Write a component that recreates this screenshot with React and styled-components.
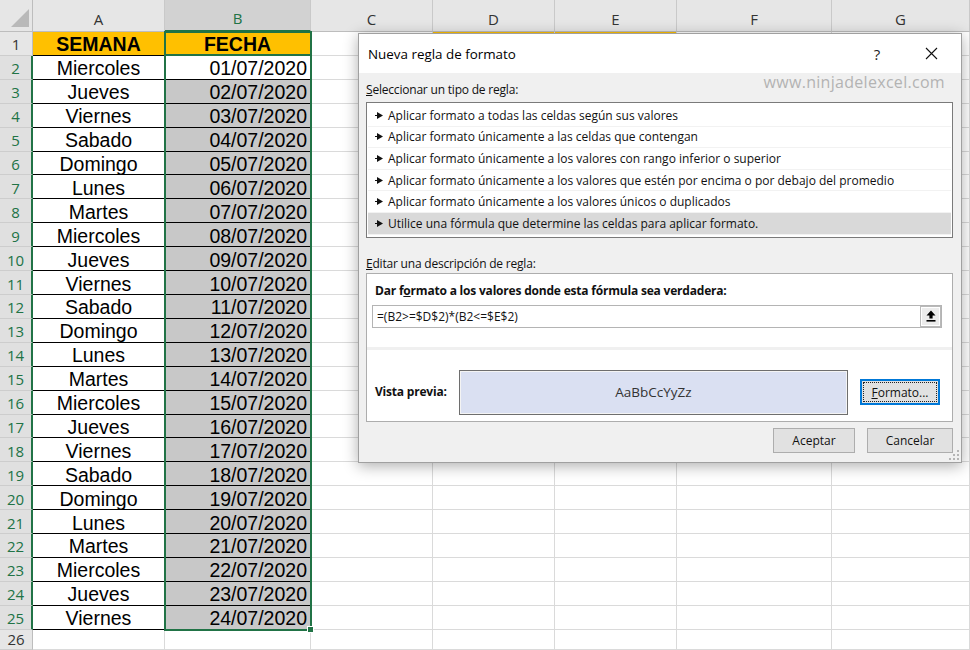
import React from 'react';
import styled, { createGlobalStyle, css } from 'styled-components';

const GREEN = '#217346';

const GlobalStyle = createGlobalStyle`
  html, body { margin: 0; padding: 0; background: #fff; overflow: hidden; }
  body { font-family: "Open Sans", "Noto Sans", sans-serif; }
`;

const Page = styled.div`
  position: relative;
  width: 970px;
  height: 650px;
  overflow: hidden;
  background: #fff;
`;

/* ---------- spreadsheet ---------- */

const Sheet = styled.div`
  position: relative;
  display: grid;
  grid-template-columns: 33px 132px 146px 122px 122px 122px 155px 1fr;
  grid-template-rows: 32px repeat(25, 23.92px) 20px;
`;

const Corner = styled.div`
  box-sizing: border-box;
  background: #e6e6e6;
  border-right: 1px solid #bdbdbd;
  border-bottom: 1px solid #bdbdbd;
  display: flex;
  align-items: flex-end;
  justify-content: flex-end;
  padding: 0 3px 4px 0;
`;

const ColHead = styled.div`
  box-sizing: border-box;
  display: flex;
  align-items: center;
  justify-content: center;
  padding-top: 6px;
  font: 15px "Open Sans", sans-serif;
  background: ${p => (p.$selected ? '#d2d2d2' : '#e6e6e6')};
  color: ${p => (p.$selected ? GREEN : '#333')};
  border-right: 1px solid #c9c9c9;
  border-bottom: ${p => (p.$selected ? `2px solid ${GREEN}` : '1px solid #bdbdbd')};
`;

const RowHead = styled.div`
  box-sizing: border-box;
  display: flex;
  align-items: center;
  justify-content: center;
  padding-top: ${p => (p.$last ? 0 : 2)}px;
  font: 15px "Open Sans", sans-serif;
  background: ${p => (p.$selected ? '#e0e0e0' : '#e6e6e6')};
  color: ${p => (p.$selected ? GREEN : '#333')};
  border-bottom: 1px solid #cdcdcd;
  border-right: ${p => (p.$selected ? `2px solid ${GREEN}` : '1px solid #bdbdbd')};
`;

const kinds = {
  title: css`
    background: #ffc000;
    font-weight: bold;
    justify-content: center;
    border-color: #000;
  `,
  orange: css`
    background: #ffc000;
  `,
  name: css`
    justify-content: center;
    border-color: #000;
  `,
  date: css`
    justify-content: flex-end;
    padding-right: 3px;
    background: #c8c8c8;
    border-color: #000;
  `,
  blank: css``,
};

const Cell = styled.div`
  box-sizing: border-box;
  display: flex;
  align-items: center;
  padding-top: 3px;
  overflow: hidden;
  white-space: nowrap;
  font: 19.5px "Liberation Sans", Arial, sans-serif;
  color: #000;
  border-right: 1px solid #dadada;
  border-bottom: 1px solid #dadada;
  ${p => kinds[p.$kind || 'blank']}
  ${p => p.$active && css`background: #fff;`}
  ${p => p.$greenBottom && css`border-bottom: 2px solid ${GREEN};`}
`;

const Selection = styled.div`
  position: absolute;
  left: 164px;
  top: 31px;
  width: 148px;
  height: 600px;
  box-sizing: border-box;
  border: 2px solid ${GREEN};
  pointer-events: none;
`;

const FillHandle = styled.div`
  position: absolute;
  left: 307px;
  top: 626px;
  width: 7px;
  height: 7px;
  box-sizing: border-box;
  background: ${GREEN};
  border: 1px solid #fff;
`;

/* ---------- dialog ---------- */

const Dialog = styled.div`
  position: absolute;
  left: 358px;
  top: 33px;
  width: 604px;
  height: 430px;
  box-sizing: border-box;
  display: flex;
  flex-direction: column;
  background: #f0f0f0;
  border: 1px solid #a0a0a0;
  box-shadow: 0 3px 14px rgba(0, 0, 0, 0.32);
  font-family: "Open Sans", "Noto Sans", sans-serif;
  font-size: 12px;
  color: #111;
`;

const TitleBar = styled.div`
  flex: none;
  height: 39px;
  display: flex;
  align-items: center;
  background: #fff;
  padding-left: 9px;
`;

const Title = styled.div`
  flex: 1;
  font-size: 13.4px;
  color: #000;
`;

const TitleButton = styled.div`
  width: 46px;
  height: 39px;
  display: flex;
  align-items: center;
  justify-content: center;
  margin-right: ${p => p.$gap}px;
  font-size: 15px;
  color: #222;
`;

const Watermark = styled.div`
  position: absolute;
  top: 37px;
  right: 16px;
  font-size: 16px;
  letter-spacing: 0.3px;
  color: #b3b3b3;
`;

const Body = styled.div`
  flex: 1;
  display: flex;
  flex-direction: column;
  padding: 0 8px 0 7px;
`;

const Label = styled.div`
  margin-top: ${p => p.$top}px;
  line-height: 14px;
  letter-spacing: -0.2px;
`;

const ListBox = styled.div`
  margin-top: 5px;
  border: 1px solid #7a7a7a;
  background: #fff;
  padding: 2px 1px;
`;

const ListItem = styled.div`
  box-sizing: border-box;
  height: 21.6px;
  display: flex;
  align-items: center;
  padding-left: 7px;
  border-bottom: 1px solid #f2f2f2;
  white-space: nowrap;
  background: ${p => (p.$selected ? '#d9d9d9' : 'transparent')};
`;

const Pointer = styled.svg`
  flex: none;
  margin-right: 5px;
`;

const DescBox = styled.div`
  margin-top: 2px;
  height: 149px;
  box-sizing: border-box;
  border: 1px solid #adadad;
  background: #fff;
  display: flex;
  flex-direction: column;
`;

const Upper = styled.div`
  flex: none;
  height: 73px;
  box-sizing: border-box;
  padding: 10px 10px 0 5px;
`;

const BoldLabel = styled.div`
  font-weight: bold;
  line-height: 14px;
  letter-spacing: -0.2px;
  white-space: nowrap;
  padding-left: ${p => p.$pad || 0}px;
`;

const FormulaInput = styled.div`
  margin-top: 7px;
  height: 23px;
  box-sizing: border-box;
  border: 1px solid #b4b4b4;
  display: flex;
  align-items: center;
  padding-left: 4px;
`;

const RefButton = styled.div`
  margin-left: auto;
  width: 21px;
  height: 21px;
  box-sizing: border-box;
  border: 1px solid #b9b9b9;
  box-shadow: inset 0 0 0 1px #fff;
  background: #ececec;
  display: flex;
  align-items: center;
  justify-content: center;
`;

const Separator = styled.div`
  flex: none;
  height: 3px;
  background: #f0f0f0;
`;

const Lower = styled.div`
  flex: 1;
  display: flex;
  align-items: center;
  padding-top: 14px;
`;

const PreviewLabel = styled(BoldLabel)`
  width: 92px;
  box-sizing: border-box;
  padding-left: 8px;
`;

const Preview = styled.div`
  width: 389px;
  height: 45px;
  box-sizing: border-box;
  border: 1px solid #6e6e6e;
  box-shadow: inset 0 0 0 1px #f4f4f4;
  background: #dae0f2;
  display: flex;
  align-items: center;
  justify-content: center;
  font-size: 13.5px;
  color: #333;
`;

const Button = styled.div`
  width: ${p => p.$w}px;
  height: ${p => p.$h || 25}px;
  box-sizing: border-box;
  border: 1px solid #adadad;
  background: #e1e1e1;
  display: flex;
  align-items: center;
  justify-content: center;
  font-size: 12px;
  ${p => p.$focused && css`
    border: 2px solid #0078d7;
    padding: 1px;
  `}
`;

const FocusRing = styled.span`
  flex: 1;
  align-self: stretch;
  display: flex;
  align-items: center;
  justify-content: center;
  border: 1px dotted #222;
`;

const ButtonRow = styled.div`
  margin-top: 6px;
  display: flex;
  justify-content: flex-end;
  gap: 12px;
`;

const Grip = styled.svg`
  position: absolute;
  right: 2px;
  bottom: 2px;
`;

/* ---------- data ---------- */

const DAYS = ['Miercoles', 'Jueves', 'Viernes', 'Sabado', 'Domingo', 'Lunes', 'Martes'];
const ROWS = Array.from({ length: 24 }, (_, i) => ({
  day: DAYS[i % 7],
  date: `${String(i + 1).padStart(2, '0')}/07/2020`,
}));
const COLS = ['A', 'B', 'C', 'D', 'E', 'F', 'G'];

const RULES = [
  'Aplicar formato a todas las celdas según sus valores',
  'Aplicar formato únicamente a las celdas que contengan',
  'Aplicar formato únicamente a los valores con rango inferior o superior',
  'Aplicar formato únicamente a los valores que estén por encima o por debajo del promedio',
  'Aplicar formato únicamente a los valores únicos o duplicados',
  'Utilice una fórmula que determine las celdas para aplicar formato.',
];

const Blanks = ({ n, row }) =>
  Array.from({ length: n }, (_, i) => <Cell key={`${row}-b${i}`} />);

export default function App() {
  return (
    <Page>
      <GlobalStyle />
      <Sheet>
        <Corner>
          <svg width="18" height="18" viewBox="0 0 18 18">
            <polygon points="18,0 18,18 0,18" fill="#b9b9b9" />
          </svg>
        </Corner>
        {COLS.map(c => (
          <ColHead key={c} $selected={c === 'B'}>{c}</ColHead>
        ))}

        <RowHead>1</RowHead>
        <Cell $kind="title">SEMANA</Cell>
        <Cell $kind="title" $greenBottom>FECHA</Cell>
        <Cell />
        <Cell $kind="orange" />
        <Cell $kind="orange" />
        <Cell />
        <Cell />

        {ROWS.map((r, i) => (
          <React.Fragment key={r.date}>
            <RowHead $selected>{i + 2}</RowHead>
            <Cell $kind="name">{r.day}</Cell>
            <Cell $kind="date" $active={i === 0}>{r.date}</Cell>
            <Blanks n={5} row={i} />
          </React.Fragment>
        ))}

        <RowHead $last>26</RowHead>
        <Blanks n={7} row={26} />

        <Selection />
        <FillHandle />
      </Sheet>

      <Dialog>
        <TitleBar>
          <Title>Nueva regla de formato</Title>
          <TitleButton $gap={8}>?</TitleButton>
          <TitleButton $gap={7}>
            <svg width="13" height="13" viewBox="0 0 13 13">
              <path d="M1 1L12 12M12 1L1 12" stroke="#111" strokeWidth="1.1" />
            </svg>
          </TitleButton>
        </TitleBar>
        <Watermark>www.ninjadelexcel.com</Watermark>

        <Body>
          <Label $top={10}><u>S</u>eleccionar un tipo de regla:</Label>
          <ListBox>
            {RULES.map((t, i) => (
              <ListItem key={t} $selected={i === RULES.length - 1}>
                <Pointer width="8" height="7" viewBox="0 0 8 7">
                  <rect x="0" y="3" width="3" height="1" fill="#111" />
                  <polygon points="2,0 8,3.5 2,7" fill="#111" />
                </Pointer>
                {t}
              </ListItem>
            ))}
          </ListBox>

          <Label $top={19}><u>E</u>ditar una descripción de regla:</Label>
          <DescBox>
            <Upper>
              <BoldLabel $pad={3}>Dar f<u>o</u>rmato a los valores donde esta fórmula sea verdadera:</BoldLabel>
              <FormulaInput>
                =(B2&gt;=$D$2)*(B2&lt;=$E$2)
                <RefButton>
                  <svg width="10" height="12" viewBox="0 0 10 12">
                    <polygon points="5,0.5 9.5,5.5 6.6,5.5 6.6,8.5 3.4,8.5 3.4,5.5 0.5,5.5" fill="#000" />
                    <rect x="0.5" y="10" width="9" height="1.6" fill="#000" />
                  </svg>
                </RefButton>
              </FormulaInput>
            </Upper>
            <Separator />
            <Lower>
              <PreviewLabel>Vista previa:</PreviewLabel>
              <Preview>AaBbCcYyZz</Preview>
              <div style={{ width: 12 }} />
              <Button $w={80} $h={26} $focused>
                <FocusRing><u>F</u>ormato...</FocusRing>
              </Button>
            </Lower>
          </DescBox>

          <ButtonRow>
            <Button $w={82}>Aceptar</Button>
            <Button $w={86}>Cancelar</Button>
          </ButtonRow>
        </Body>

        <Grip width="10" height="10" viewBox="0 0 10 10">
          {[[8, 0], [8, 4], [4, 4], [8, 8], [4, 8], [0, 8]].map(([x, y]) => (
            <rect key={`${x}-${y}`} x={x} y={y} width="2" height="2" fill="#b5b5b5" />
          ))}
        </Grip>
      </Dialog>
    </Page>
  );
}
